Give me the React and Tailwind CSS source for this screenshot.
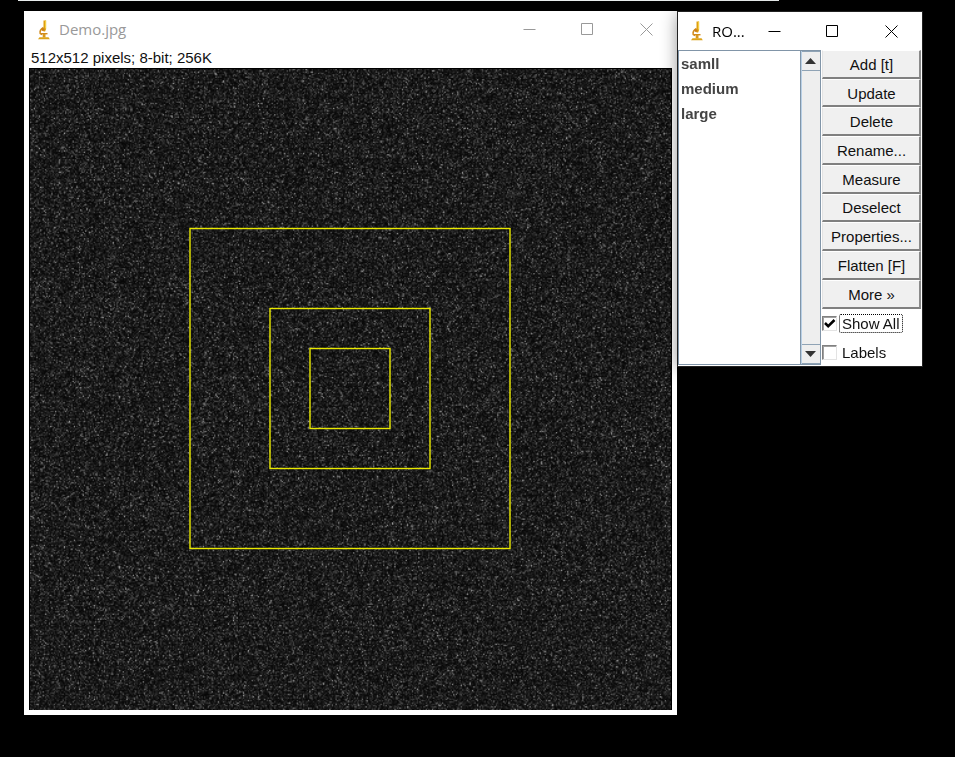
import { useEffect, useRef } from "react";

const REGIONS = [
  { name: "samll", size: 80 },
  { name: "medium", size: 160 },
  { name: "large", size: 320 },
];

const ACTIONS = [
  "Add [t]",
  "Update",
  "Delete",
  "Rename...",
  "Measure",
  "Deselect",
  "Properties...",
  "Flatten [F]",
  "More »",
];

function Microscope() {
  return (
    <svg viewBox="0 0 14 20" className="h-5 w-3.5 shrink-0" aria-hidden="true">
      <path d="M6.500 0.500h2.600v8.500l-1 2.500h-1.600z" fill="#dfa012" />
      <path d="M8 0.500h1.100v8H8z" fill="#f4cf45" />
      <path d="M6.500 7.500C3.800 9 2.600 11 3.200 13.500L5 14.500" fill="none" stroke="#d18a1c" strokeWidth="1.500" />
      <circle cx="6" cy="9.500" r="1.500" fill="#c97f16" />
      <path d="M4 13H10.500v1.400H4z" fill="#d18a1c" />
      <path d="M5.700 14h2.800v3.500H5.700z" fill="#d8981c" />
      <path d="M1 19.300l1.500-2.100h9l1.300 2.100z" fill="#dca31a" />
    </svg>
  );
}

function WindowButtons() {
  return (
    <div className="flex shrink-0">
      <button aria-label="Minimize" className="flex h-9 w-[58px] items-center justify-center">
        <svg viewBox="0 0 13 13" className="size-[13px]" fill="none" stroke="currentColor">
          <path d="M0.5 6.5h12" />
        </svg>
      </button>
      <button aria-label="Maximize" className="flex h-9 w-[58px] items-center justify-center">
        <svg viewBox="0 0 13 13" className="size-[13px]" fill="none" stroke="currentColor">
          <path d="M0.5 0.5h11v11h-11z" />
        </svg>
      </button>
      <button aria-label="Close" className="flex h-9 w-[61px] items-center justify-center">
        <svg viewBox="0 0 13 13" className="size-[13px]" fill="none" stroke="currentColor">
          <path d="M0.5 0.5l12 12M12.5 0.5l-12 12" />
        </svg>
      </button>
    </div>
  );
}

// Small seeded generator, so the specimen looks the same on every load.
function createRandom(start) {
  let state = start;
  return () => {
    state = (state + 0x6d2b79f5) | 0;
    let t = Math.imul(state ^ (state >>> 15), 1 | state);
    t = (t + Math.imul(t ^ (t >>> 7), 61 | t)) ^ t;
    return ((t ^ (t >>> 14)) >>> 0) / 4294967296;
  };
}

function NoiseImage() {
  const ref = useRef(null);

  useEffect(() => {
    const ctx = ref.current.getContext("2d");
    const image = ctx.createImageData(512, 512);
    const random = createRandom(20231);
    for (let i = 0; i < 512 * 512; i++) {
      const v = Math.min(150, 6 - 25 * Math.log(1 - random()));
      image.data[i * 4] = v;
      image.data[i * 4 + 1] = v;
      image.data[i * 4 + 2] = v;
      image.data[i * 4 + 3] = 255;
    }
    ctx.putImageData(image, 0, 0);
  }, []);

  return (
    <div className="relative border-x border-t border-black">
      <canvas ref={ref} width="512" height="512" className="block aspect-square w-full" />
      <svg
        viewBox="0 0 641 641"
        className="absolute inset-0 size-full"
        fill="none"
        stroke="#e8e800"
        strokeWidth="1.4"
      >
        {REGIONS.map((r) => (
          <rect key={r.name} x={320 - r.size / 2} y={319.5 - r.size / 2} width={r.size} height={r.size} />
        ))}
      </svg>
    </div>
  );
}

function ImageWindow() {
  return (
    <section className="absolute top-[11px] left-6 w-[653px] bg-white px-[5px] pb-[5px]">
      <header className="-mr-[5px] flex h-[37px] items-center justify-between pl-2 text-[#999999]">
        <div className="flex items-center gap-2 font-['Open_Sans',sans-serif] text-[15px]">
          <Microscope />
          <h1>Demo.jpg</h1>
        </div>
        <WindowButtons />
      </header>
      <p className="h-5 pl-0.5 font-['Liberation_Sans',Arial,sans-serif] text-[15px] leading-[19px] text-[#111111]">
        512x512 pixels; 8-bit; 256K
      </p>
      <NoiseImage />
    </section>
  );
}

function ScrollButton({ label, down }) {
  return (
    <button
      aria-label={label}
      className="flex h-5 items-center justify-center border-y border-[#8fa3b5] bg-[#eeeeee] pr-0.5"
    >
      <svg viewBox="0 0 11 6" className="h-1.5 w-[11px]" fill="#333333">
        <path d={down ? "M0 0h11L5.500 6z" : "M0 6h11L5.500 0z"} />
      </svg>
    </button>
  );
}

function RoiList() {
  return (
    <div className="flex w-[143px] shrink-0 border border-[#8195a8]">
      <ul className="flex-1 px-0.5 text-[15px] leading-[25px] font-bold text-[#444444]">
        {REGIONS.map((r) => (
          <li key={r.name}>{r.name}</li>
        ))}
      </ul>
      <div className="flex w-5 flex-col justify-between border-l border-[#8195a8] bg-[#eeeeee] pl-px shadow-[inset_1px_0_0_#b8cfe5]">
        <ScrollButton label="Scroll up" />
        <ScrollButton label="Scroll down" down />
      </div>
    </div>
  );
}

function CheckBox({ label, checked, focused }) {
  return (
    <label className="flex items-center gap-0.5 pt-px">
      <span className="grid size-[15px] shrink-0 border border-t-[#808080] border-r-[#e3e3e3] border-b-[#e3e3e3] border-l-[#808080] bg-white shadow-[inset_1px_1px_0_#a0a0a0]">
        <input
          type="checkbox"
          defaultChecked={checked}
          className="peer col-start-1 row-start-1 size-[13px] appearance-none outline-none"
        />
        <svg
          viewBox="0 0 13 13"
          className="pointer-events-none col-start-1 row-start-1 hidden size-[13px] peer-checked:block"
          fill="none"
          stroke="#000000"
          strokeWidth="2.500"
        >
          <path d="M2 6l3.200 3.200L11.500 3" />
        </svg>
      </span>
      <span
        className={
          focused
            ? "rounded-xs border border-dotted border-black px-0.5 leading-[17px]"
            : "border border-transparent px-0.5 leading-[17px]"
        }
      >
        {label}
      </span>
    </label>
  );
}

function RoiManager() {
  return (
    <section className="absolute top-3 left-[678px] flex h-[354px] w-[244px] flex-col bg-white text-black shadow-[0_0_0_1px_#222222,0_2px_16px_rgba(0,0,0,0.45)]">
      <header className="flex h-[38px] shrink-0 items-center justify-between pl-3">
        <div className="flex items-center gap-2 font-['Open_Sans',sans-serif] text-[15px]">
          <Microscope />
          <h2>RO...</h2>
        </div>
        <WindowButtons />
      </header>
      <div className="flex min-h-0 flex-1 font-['Liberation_Sans',Arial,sans-serif]">
        <div className="flex pb-px">
          <RoiList />
        </div>
        <div className="grid flex-1 auto-rows-fr pr-px pl-px text-[15px] leading-5 text-[#111111]">
          {ACTIONS.map((name) => (
            <button
              key={name}
              className="border-t border-r-2 border-b-2 border-l border-t-white border-r-[#8a8a8a] border-b-[#808080] border-l-[#e3e3e3] bg-[#f0f0f0] pt-0.5 pl-px"
            >
              {name}
            </button>
          ))}
          <CheckBox label="Show All" checked focused />
          <CheckBox label="Labels" />
        </div>
      </div>
    </section>
  );
}

export default function App() {
  return (
    <main className="relative min-h-screen overflow-hidden bg-black">
      <div className="mr-44 ml-[18px] h-px bg-[#e8ecec]" />
      <ImageWindow />
      <RoiManager />
    </main>
  );
}
